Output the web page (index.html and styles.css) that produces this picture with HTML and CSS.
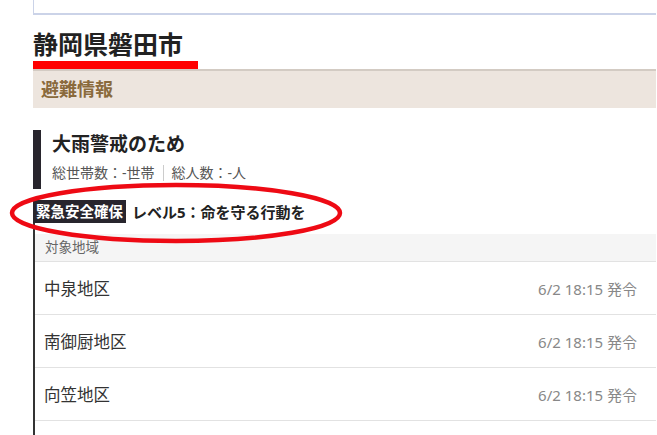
FILE: index.html
```html
<!DOCTYPE html>
<html lang="ja">
<head>
    <meta charset="UTF-8">
    <meta name="viewport" content="width=device-width, initial-scale=1.0">
    <title>静岡県磐田市 避難情報</title>
    <link rel="stylesheet" href="styles.css">
</head>
<body>
    <div class="page">
        <div class="top-box"></div>

        <div class="city">
            <h1>静岡県磐田市</h1>
        </div>

        <div class="section-head">避難情報</div>

        <div class="alert">
            <div class="alert-title">
                <h2>大雨警戒のため</h2>
                <div class="stats">
                    <span>総世帯数：-世帯</span>
                    <span class="sep"></span>
                    <span>総人数：-人</span>
                </div>
            </div>

            <div class="level">
                <span class="badge">緊急安全確保</span>
                <span class="level-text">レベル5：命を守る行動を</span>
                <svg class="circle" width="336" height="64" viewBox="0 0 336 64">
                    <ellipse cx="168" cy="32" rx="164" ry="28" fill="none" stroke="#ee0a14" stroke-width="4.5"/>
                </svg>
            </div>

            <div class="areas">
                <div class="areas-head">対象地域</div>
                <div class="area-row">
                    <span class="area-name">中泉地区</span>
                    <span class="area-time">6/2 18:15 発令</span>
                </div>
                <div class="area-row">
                    <span class="area-name">南御厨地区</span>
                    <span class="area-time">6/2 18:15 発令</span>
                </div>
                <div class="area-row">
                    <span class="area-name">向笠地区</span>
                    <span class="area-time">6/2 18:15 発令</span>
                </div>
                <div class="area-row">
                    <span class="area-name">&nbsp;</span>
                </div>
            </div>
        </div>
    </div>
</body>
</html>
```

FILE: styles.css
```css
body {
    margin: 0;
    background-color: #fff;
    font-family: "Noto Sans", "Noto Sans CJK JP", sans-serif;
    color: #333;
    overflow: hidden;
}
.page {
    margin-left: 33px;
    width: 623px;
}
.top-box {
    height: 13px;
    border-left: 1px solid #cbd3e8;
    border-bottom: 2px solid #cbd3e8;
}
.city {
    padding-top: 12px;
    line-height: 0;
}
.city h1 {
    display: inline-block;
    margin: 0;
    padding-right: 15px;
    font-size: 25px;
    line-height: 34px;
    font-weight: bold;
    color: #222;
    border-bottom: 8px solid #ff0000;
}
.section-head {
    border-top: 2px solid #d3cbc3;
    background-color: #ede5de;
    color: #8a6a3c;
    font-size: 18px;
    font-weight: bold;
    line-height: 37px;
    padding-left: 8px;
}
.alert {
    margin-top: 22px;
}
.alert-title {
    border-left: 8px solid #28252d;
    padding-left: 11px;
    height: 59px;
}
.alert-title h2 {
    margin: 0;
    font-size: 19px;
    line-height: 29px;
    font-weight: bold;
    color: #222;
}
.stats {
    display: flex;
    align-items: center;
    margin-top: 4px;
    font-size: 14px;
    line-height: 20px;
    color: #555;
}
.stats .sep {
    width: 1px;
    height: 16px;
    background-color: #ccc;
    margin: 0 8px;
}
.level {
    position: relative;
    display: flex;
    align-items: center;
    margin-top: 11px;
    height: 23px;
}
.badge {
    background-color: #28252d;
    color: #fff;
    font-size: 14.5px;
    font-weight: bold;
    line-height: 23px;
    padding: 0 3px 0 3px;
}
.level-text {
    margin-left: 6px;
    font-size: 15px;
    font-weight: bold;
    color: #222;
}
.circle {
    position: absolute;
    left: -25px;
    top: -19px;
}
.areas {
    border-left: 2px solid #333;
    padding-top: 11px;
}
.areas-head {
    background-color: #f5f5f5;
    border-bottom: 1px solid #e2e2e2;
    font-size: 13.5px;
    line-height: 27px;
    color: #666;
    padding-left: 10px;
}
.area-row {
    display: flex;
    justify-content: space-between;
    align-items: center;
    height: 52px;
    border-bottom: 1px solid #e2e2e2;
    padding: 0 19px 0 9px;
}
.area-name {
    font-size: 16.5px;
    color: #333;
}
.area-time {
    font-size: 15px;
    color: #888;
}
```
